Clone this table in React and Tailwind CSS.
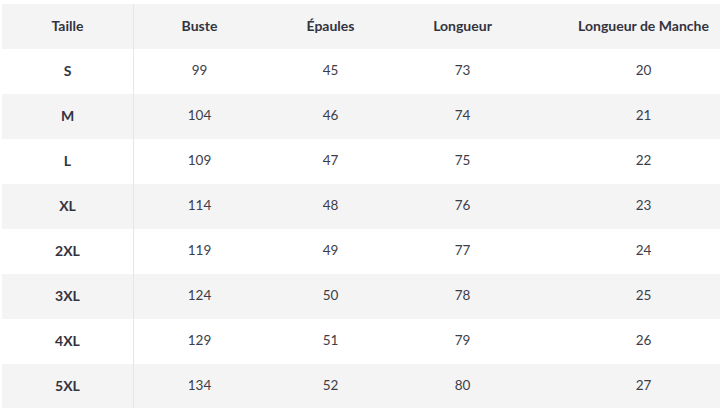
import React from 'react'

const rows = [
  ['S', '99', '45', '73', '20'],
  ['M', '104', '46', '74', '21'],
  ['L', '109', '47', '75', '22'],
  ['XL', '114', '48', '76', '23'],
  ['2XL', '119', '49', '77', '24'],
  ['3XL', '124', '50', '78', '25'],
  ['4XL', '129', '51', '79', '26'],
  ['5XL', '134', '52', '80', '27'],
]

const cols = 'grid grid-cols-[132px_131px_131px_133px_1fr] h-[45px] items-stretch'

const App = () => {
  return (
    <div className="w-[724px] h-[408px] bg-white pt-[4px] pl-[2px] overflow-hidden" style={{ fontFamily: 'Lato, "Noto Sans", sans-serif' }}>
      <div className="w-[718px]">
        <div className={`${cols} bg-[#f4f4f4] text-[14px] font-bold text-[#333340]`}>
          <div className="flex items-center justify-center pb-[2px] border-r border-[#e6e6e6]">Taille</div>
          <div className="flex items-center justify-center pb-[2px]">Buste</div>
          <div className="flex items-center justify-center pb-[2px]">Épaules</div>
          <div className="flex items-center justify-center pb-[2px]">Longueur</div>
          <div className="flex items-center justify-center pb-[2px] pl-[38px]">Longueur de Manche</div>
        </div>
        {rows.map((r, i) => (
          <div key={r[0]} className={`${cols} text-[13.5px] text-[#3d3d4a] ${i % 2 === 1 ? 'bg-[#f4f4f4]' : 'bg-white'}`}>
            <div className="flex items-center justify-center pb-[2px] border-r border-[#e6e6e6] font-bold text-[14px] text-[#333340]">{r[0]}</div>
            <div className="flex items-center justify-center pb-[2px]">{r[1]}</div>
            <div className="flex items-center justify-center pb-[2px]">{r[2]}</div>
            <div className="flex items-center justify-center pb-[2px]">{r[3]}</div>
            <div className="flex items-center justify-center pb-[2px] pl-[38px]">{r[4]}</div>
          </div>
        ))}
      </div>
    </div>
  )
}

export default App
